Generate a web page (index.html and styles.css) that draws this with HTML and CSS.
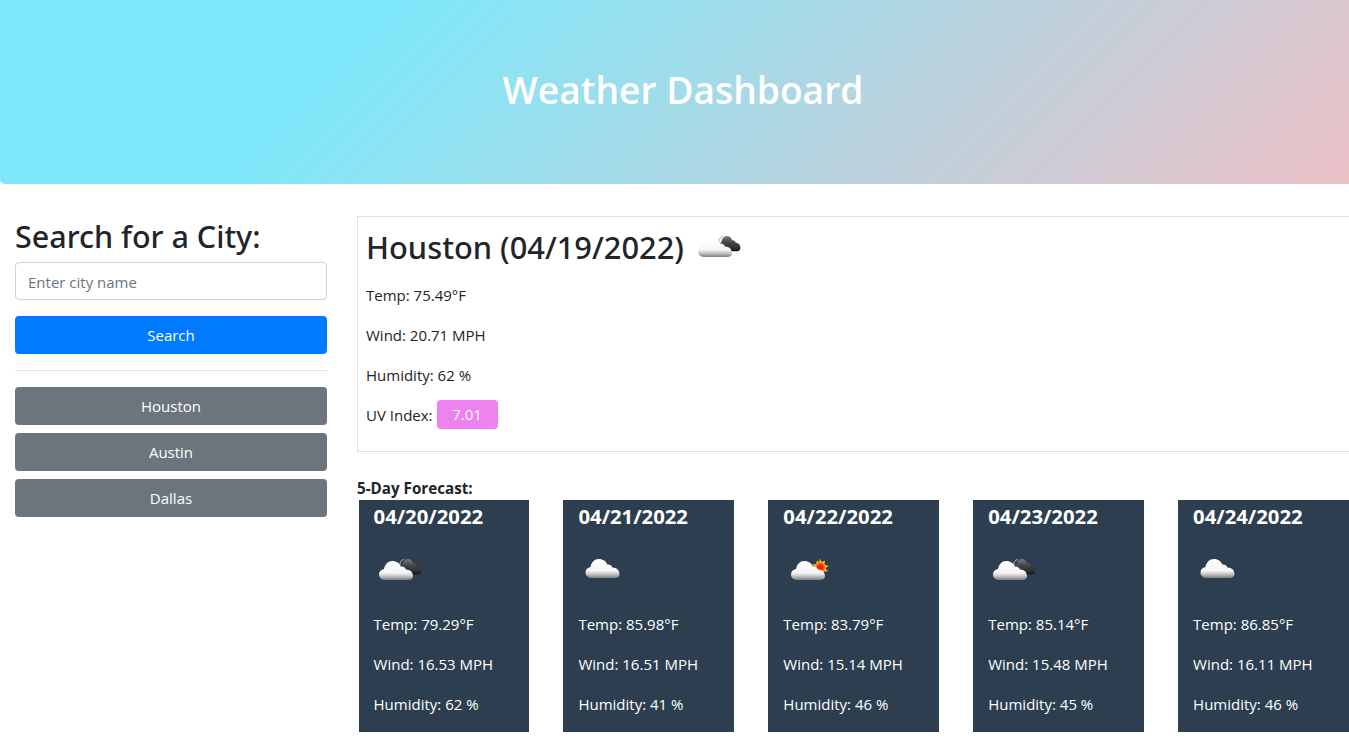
FILE: index.html
```html
<!DOCTYPE html>
<html lang="en">
<head>
    <meta charset="UTF-8">
    <meta name="viewport" content="width=device-width, initial-scale=1.0">
    <title>Weather Dashboard</title>
    <link rel="stylesheet" href="styles.css">
</head>
<body>
    <svg class="icon-defs" width="0" height="0">
        <defs>
            <linearGradient id="white-cloud" x1="0" y1="0" x2="0" y2="1">
                <stop offset="0" stop-color="#ffffff"/>
                <stop offset="0.62" stop-color="#f6f6f6"/>
                <stop offset="0.8" stop-color="#c4c4c4"/>
                <stop offset="1" stop-color="#7d7d7d"/>
            </linearGradient>
            <linearGradient id="dark-cloud" x1="0" y1="0" x2="0" y2="1">
                <stop offset="0" stop-color="#7a7a7a"/>
                <stop offset="0.45" stop-color="#444444"/>
                <stop offset="0.85" stop-color="#2c2c2c"/>
                <stop offset="1" stop-color="#0c0c0c"/>
            </linearGradient>
            <radialGradient id="sun-core" cx="0.5" cy="0.5" r="0.5">
                <stop offset="0" stop-color="#f01a10"/>
                <stop offset="0.6" stop-color="#f5300f"/>
                <stop offset="1" stop-color="#f98a0c"/>
            </radialGradient>
            <path id="cloud-shape" d="M6 19C2.5 19 0 16.5 0 13.5C0 10.5 2 8.500 5 8C5.800 3.500 9 0 13.500 0C17.500 0 20.500 2.300 21.800 5.500C24 5 26 6.200 27 8.500C31 8.500 34 11.300 34 15C34 17.500 32 19 29 19Z"/>
            <symbol id="icon-cloud" viewBox="0 0 50 50">
                <use href="#cloud-shape" x="7.500" y="13" fill="url(#white-cloud)"/>
            </symbol>
            <symbol id="icon-broken" viewBox="0 0 50 50">
                <g transform="translate(25 13) scale(0.66 0.8)">
                    <use href="#cloud-shape" fill="url(#dark-cloud)"/>
                </g>
                <path d="M30 13.500A5 5 0 0 0 26 19" fill="none" stroke="#b5b5b5" stroke-width="1"/>
                <use href="#cloud-shape" x="5" y="15" fill="url(#white-cloud)"/>
            </symbol>
            <symbol id="icon-sun" viewBox="0 0 50 50">
                <path d="M37 12.500L38.500 16L42 14.500L41.500 18.500L46 20L42.500 22L45 25.500L41 25.500L40.500 29L37.500 27L34 29L33 25.500L29 25L31.500 22L29 18.500L33 18L34 14.500L36 16Z" fill="#f9b115"/>
                <circle cx="37.300" cy="21.300" r="4.800" fill="url(#sun-core)"/>
                <use href="#cloud-shape" x="8" y="15" fill="url(#white-cloud)"/>
            </symbol>
        </defs>
    </svg>

    <header class="hero">
        <h1>Weather Dashboard</h1>
    </header>

    <div class="layout">
        <aside class="sidebar">
            <h2>Search for a City:</h2>
            <form class="search-form">
                <input type="text" class="city-input" placeholder="Enter city name">
                <button type="button" class="btn btn-primary">Search</button>
            </form>
            <hr>
            <div class="history">
                <button type="button" class="btn btn-secondary">Houston</button>
                <button type="button" class="btn btn-secondary">Austin</button>
                <button type="button" class="btn btn-secondary">Dallas</button>
            </div>
        </aside>

        <main class="content">
            <section class="today">
                <h2 class="today-title">Houston (04/19/2022)
                    <svg class="today-icon"><use href="#icon-broken"/></svg>
                </h2>
                <p>Temp: 75.49°F</p>
                <p>Wind: 20.71 MPH</p>
                <p>Humidity: 62 %</p>
                <p class="uv-row">UV Index: <span class="uv-badge">7.01</span></p>
            </section>

            <h6 class="forecast-title">5-Day Forecast:</h6>
            <div class="forecast">
                <article class="day-card">
                    <h5>04/20/2022</h5>
                    <svg class="day-icon"><use href="#icon-broken"/></svg>
                    <p>Temp: 79.29°F</p>
                    <p>Wind: 16.53 MPH</p>
                    <p>Humidity: 62 %</p>
                </article>
                <article class="day-card">
                    <h5>04/21/2022</h5>
                    <svg class="day-icon"><use href="#icon-cloud"/></svg>
                    <p>Temp: 85.98°F</p>
                    <p>Wind: 16.51 MPH</p>
                    <p>Humidity: 41 %</p>
                </article>
                <article class="day-card">
                    <h5>04/22/2022</h5>
                    <svg class="day-icon"><use href="#icon-sun"/></svg>
                    <p>Temp: 83.79°F</p>
                    <p>Wind: 15.14 MPH</p>
                    <p>Humidity: 46 %</p>
                </article>
                <article class="day-card">
                    <h5>04/23/2022</h5>
                    <svg class="day-icon"><use href="#icon-broken"/></svg>
                    <p>Temp: 85.14°F</p>
                    <p>Wind: 15.48 MPH</p>
                    <p>Humidity: 45 %</p>
                </article>
                <article class="day-card">
                    <h5>04/24/2022</h5>
                    <svg class="day-icon"><use href="#icon-cloud"/></svg>
                    <p>Temp: 86.85°F</p>
                    <p>Wind: 16.11 MPH</p>
                    <p>Humidity: 46 %</p>
                </article>
            </div>
        </main>
    </div>
</body>
</html>
```

FILE: styles.css
```css
* {
    box-sizing: border-box;
}
body {
    font-family: "Open Sans", "Noto Sans", Arial, sans-serif;
    font-size: 15px;
    line-height: 24px;
    margin: 0;
    color: #212529;
    background-color: #fff;
    overflow-x: hidden;
}
.icon-defs {
    position: absolute;
}
p {
    margin: 0 0 16px;
}
.hero {
    width: 1366px;
    height: 184px;
    display: flex;
    align-items: center;
    justify-content: center;
    padding-bottom: 4px;
    border-radius: 0 0 5px 5px;
    background-color: #7ee8fa;
    background-image: linear-gradient(315deg, #eec0c6 0%, #7ee8fa 74%);
}
.hero h1 {
    margin: 0;
    font-size: 37.2px;
    line-height: 44px;
    font-weight: 600;
    color: #fff;
}
.layout {
    display: flex;
    padding-top: 32px;
}
.sidebar {
    flex: 0 0 342px;
    padding: 0 15px;
}
.sidebar h2 {
    margin: 0 0 8px;
    padding-top: 1px;
    height: 38px;
    font-family: "Noto Sans", "Open Sans", sans-serif;
    font-size: 30.5px;
    line-height: 38px;
    font-weight: 500;
}
.search-form {
    display: flex;
    flex-direction: column;
    gap: 16px;
}
.city-input {
    height: 38px;
    padding: 7px 12px 5px;
    font-family: inherit;
    font-size: 15px;
    color: #495057;
    border: 1px solid #ced4da;
    border-radius: 4px;
}
.city-input::placeholder {
    color: #6c757d;
}
.sidebar hr {
    margin: 16px 0;
    border: 0;
    border-top: 1px solid #e3e4e6;
}
.history {
    display: flex;
    flex-direction: column;
    gap: 8px;
}
.btn {
    height: 38px;
    width: 100%;
    font-family: inherit;
    font-size: 15px;
    color: #fff;
    border: none;
    border-radius: 4px;
}
.btn-primary {
    background-color: #007bff;
}
.btn-secondary {
    background-color: #6c757d;
}
.content {
    flex: 0 0 1007px;
    min-width: 0;
    padding-left: 15px;
}
.today {
    width: 1010px;
    height: 236px;
    padding: 8px;
    border: 1px solid #dfdfe6;
}
.today-title {
    display: flex;
    align-items: center;
    gap: 9px;
    height: 50px;
    margin: 0 0 8px;
    padding-bottom: 6px;
    font-family: "Noto Sans", "Open Sans", sans-serif;
    font-size: 30.8px;
    line-height: 38px;
    font-weight: 500;
}
.today-icon {
    width: 50px;
    height: 50px;
    margin-top: 2px;
    flex: none;
}
.uv-row {
    display: flex;
    align-items: center;
    gap: 4px;
    margin: -3px 0 0;
}
.uv-badge {
    width: 61px;
    height: 29px;
    line-height: 29px;
    text-align: center;
    color: #fff;
    background-color: #ee82ee;
    border-radius: 4px;
}
.forecast-title {
    margin: 26px 0 2px;
    font-size: 15.2px;
    line-height: 20px;
    font-weight: 700;
}
.forecast {
    display: flex;
    gap: 34.1px;
    padding-left: 1.55px;
}
.day-card {
    flex: 0 0 170.8px;
    height: 232px;
    padding: 4px 15px;
    color: #fff;
    background-color: #2c3e50;
}
.day-card h5 {
    margin: 0 0 18px;
    font-size: 20.3px;
    line-height: 24px;
    font-weight: 700;
}
.day-icon {
    display: block;
    width: 50px;
    height: 50px;
    margin-bottom: 16px;
}
```
